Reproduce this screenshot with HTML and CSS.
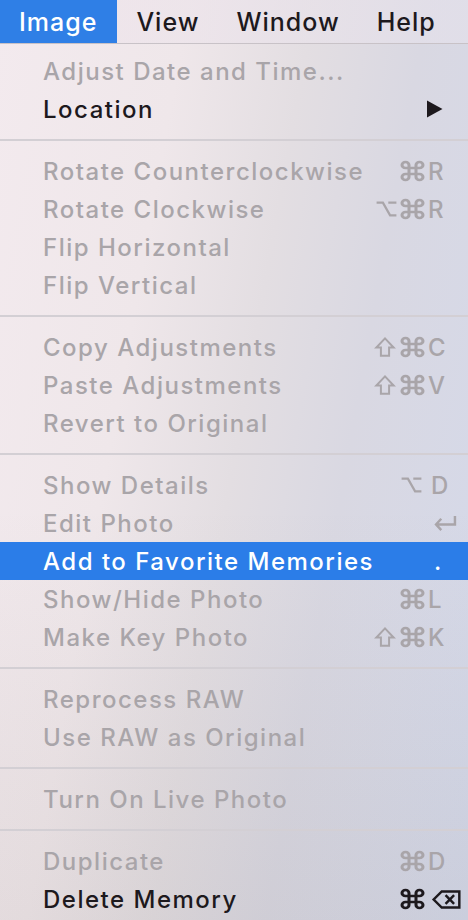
FILE: index.html
```html
<!DOCTYPE html>
<html>
<head>
<meta charset="utf-8">
<link rel="stylesheet" href="styles.css">
</head>
<body>
<div class="screen">
  <div class="menubar">
    <span class="mb-item active">Image</span>
    <span class="mb-item">View</span>
    <span class="mb-item">Window</span>
    <span class="mb-item">Help</span>
  </div>
  <div class="menu">
    <div class="item disabled"><span class="label">Adjust Date and Time...</span></div>
    <div class="item"><span class="label">Location</span><span class="mods"></span><span class="key"><svg class="ic arrow" viewBox="0 0 17 18"><path d="M1 0.5 16.5 9 1 17.5z"/></svg></span></div>
    <div class="sep"></div>
    <div class="item disabled"><span class="label">Rotate Counterclockwise</span><span class="mods"><svg class="ic cmd" viewBox="3 3 18 18" preserveAspectRatio="none"><path d="M15 6v12a3 3 0 1 0 3-3H6a3 3 0 1 0 3 3V6a3 3 0 1 0-3 3h12a3 3 0 1 0-3-3"/></svg></span><span class="key">R</span></div>
    <div class="item disabled"><span class="label">Rotate Clockwise</span><span class="mods tight"><svg class="ic opt" viewBox="0 0 24 20"><path d="M1 3h7l8 14h7M14 3h9"/></svg><svg class="ic cmd" viewBox="3 3 18 18" preserveAspectRatio="none"><path d="M15 6v12a3 3 0 1 0 3-3H6a3 3 0 1 0 3 3V6a3 3 0 1 0-3 3h12a3 3 0 1 0-3-3"/></svg></span><span class="key">R</span></div>
    <div class="item disabled"><span class="label">Flip Horizontal</span></div>
    <div class="item disabled"><span class="label">Flip Vertical</span></div>
    <div class="sep"></div>
    <div class="item disabled"><span class="label">Copy Adjustments</span><span class="mods"><svg class="ic shift" viewBox="0 0 22 22"><path d="M11 1.5 1.5 11.5H6.5v9h9v-9h5z"/></svg><svg class="ic cmd" viewBox="3 3 18 18" preserveAspectRatio="none"><path d="M15 6v12a3 3 0 1 0 3-3H6a3 3 0 1 0 3 3V6a3 3 0 1 0-3 3h12a3 3 0 1 0-3-3"/></svg></span><span class="key">C</span></div>
    <div class="item disabled"><span class="label">Paste Adjustments</span><span class="mods"><svg class="ic shift" viewBox="0 0 22 22"><path d="M11 1.5 1.5 11.5H6.5v9h9v-9h5z"/></svg><svg class="ic cmd" viewBox="3 3 18 18" preserveAspectRatio="none"><path d="M15 6v12a3 3 0 1 0 3-3H6a3 3 0 1 0 3 3V6a3 3 0 1 0-3 3h12a3 3 0 1 0-3-3"/></svg></span><span class="key">V</span></div>
    <div class="item disabled"><span class="label">Revert to Original</span></div>
    <div class="sep"></div>
    <div class="item disabled"><span class="label">Show Details</span><span class="mods"><svg class="ic opt" viewBox="0 0 24 20"><path d="M1 3h7l8 14h7M14 3h9"/></svg></span><span class="key key-d">D</span></div>
    <div class="item disabled"><span class="label">Edit Photo</span><span class="mods"></span><span class="key"><svg class="ic ret" viewBox="0 0 26 18"><path d="M23 1v9H3M8.5 4 3 10l5.5 6"/></svg></span></div>
    <div class="item selected"><span class="label">Add to Favorite Memories</span><span class="mods"></span><span class="key key-dot">.</span></div>
    <div class="item disabled"><span class="label">Show/Hide Photo</span><span class="mods"><svg class="ic cmd" viewBox="3 3 18 18" preserveAspectRatio="none"><path d="M15 6v12a3 3 0 1 0 3-3H6a3 3 0 1 0 3 3V6a3 3 0 1 0-3 3h12a3 3 0 1 0-3-3"/></svg></span><span class="key">L</span></div>
    <div class="item disabled"><span class="label">Make Key Photo</span><span class="mods"><svg class="ic shift" viewBox="0 0 22 22"><path d="M11 1.5 1.5 11.5H6.5v9h9v-9h5z"/></svg><svg class="ic cmd" viewBox="3 3 18 18" preserveAspectRatio="none"><path d="M15 6v12a3 3 0 1 0 3-3H6a3 3 0 1 0 3 3V6a3 3 0 1 0-3 3h12a3 3 0 1 0-3-3"/></svg></span><span class="key">K</span></div>
    <div class="sep"></div>
    <div class="item disabled"><span class="label">Reprocess RAW</span></div>
    <div class="item disabled"><span class="label">Use RAW as Original</span></div>
    <div class="sep"></div>
    <div class="item disabled"><span class="label">Turn On Live Photo</span></div>
    <div class="sep"></div>
    <div class="item disabled"><span class="label">Duplicate</span><span class="mods"><svg class="ic cmd" viewBox="3 3 18 18" preserveAspectRatio="none"><path d="M15 6v12a3 3 0 1 0 3-3H6a3 3 0 1 0 3 3V6a3 3 0 1 0-3 3h12a3 3 0 1 0-3-3"/></svg></span><span class="key">D</span></div>
    <div class="item"><span class="label">Delete Memory</span><span class="mods"><svg class="ic cmd" viewBox="3 3 18 18" preserveAspectRatio="none"><path d="M15 6v12a3 3 0 1 0 3-3H6a3 3 0 1 0 3 3V6a3 3 0 1 0-3 3h12a3 3 0 1 0-3-3"/></svg></span><span class="key"><svg class="ic del" viewBox="0 0 30 20"><path d="M10 1.5h18.5v17H10L1.5 10zM14 5.5l9 9M23 5.5l-9 9"/></svg></span></div>
  </div>
</div>
</body>
</html>
```

FILE: styles.css
```css
html, body {
  margin: 0;
  padding: 0;
}

body {
  width: 468px;
  height: 920px;
  overflow: hidden;
  font-family: Inter, "Liberation Sans", sans-serif;
  color: #1d191d;
}

.screen {
  width: 468px;
  height: 920px;
  background:
    linear-gradient(180deg, rgba(0,0,0,0) 0%, rgba(0,0,0,0) 55%, rgba(120,110,105,0.10) 100%),
    linear-gradient(100deg, #f3eaee 0%, #efe7ea 30%, #e3dee2 50%, #d9d8e2 68%, #d4d9ea 100%);
  display: flex;
  flex-direction: column;
}

.menubar {
  height: 44px;
  display: flex;
  align-items: stretch;
  border-bottom: 1px solid #c8c2c7;
  box-sizing: border-box;
  font-size: 25px;
  font-weight: 500;
  letter-spacing: 1px;
  background: linear-gradient(90deg, rgba(240,228,234,0.6), rgba(230,226,236,0.6));
}

.mb-item {
  padding: 0 18px 0 19px;
  display: flex;
  align-items: center;
  color: #1d191d;
}

.mb-item.active {
  background: #2f7fe6;
  color: #ffffff;
  padding-right: 20px;
}

.menu {
  padding-top: 8px;
  display: flex;
  flex-direction: column;
}

.item {
  height: 38px;
  display: grid;
  grid-template-columns: 1fr auto 40px;
  align-items: center;
  padding-left: 43px;
  font-size: 24px;
  font-weight: 500;
  letter-spacing: 1.5px;
  color: #1d191d;
}

.item.disabled {
  color: #a9a5a9;
}

.item.selected {
  background: #2b7de8;
  color: #ffffff;
}

.label {
  white-space: nowrap;
}

.mods {
  display: flex;
  align-items: center;
  justify-content: flex-end;
  gap: 7px;
  padding-right: 5px;
}

.mods.tight {
  gap: 4px;
}

.key {
  display: flex;
  align-items: center;
}

.key-d {
  padding-left: 3px;
}

.key-dot {
  padding-left: 6px;
}

.ic {
  fill: none;
  stroke: currentColor;
  stroke-width: 2.3;
  display: block;
  overflow: visible;
}

.cmd {
  width: 21px;
  height: 18px;
  stroke-width: 2.6;
}

.opt {
  width: 23px;
  height: 18px;
  stroke-width: 2.5;
}

.shift {
  width: 20px;
  height: 20px;
  stroke-width: 2.2;
}

.ret {
  width: 25px;
  height: 17px;
  margin-left: 5px;
  stroke-width: 2.6;
}

.del {
  width: 29px;
  height: 19px;
  margin-left: 4px;
  stroke-width: 2.6;
}

.arrow {
  width: 17px;
  height: 18px;
  fill: #1d191d;
  stroke: none;
  margin-left: -2px;
}

.sep {
  height: 24px;
  display: flex;
  align-items: center;
}

.sep::before {
  content: "";
  display: block;
  width: 100%;
  height: 2px;
  background: #d3cfd4;
}
```
